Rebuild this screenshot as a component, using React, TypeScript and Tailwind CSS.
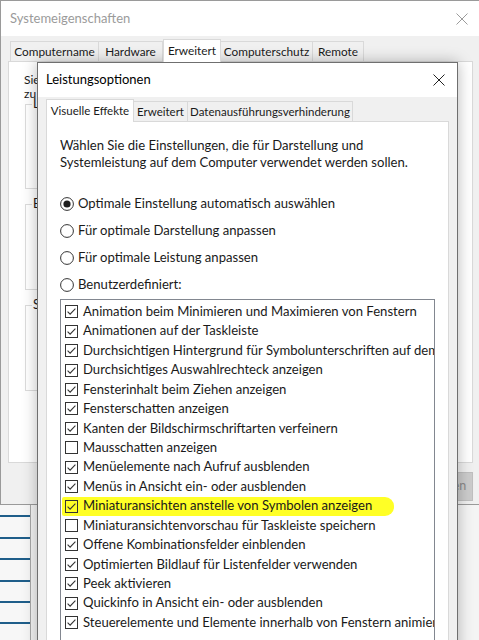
import React from 'react'

const effects: [string, boolean][] = [
  ['Animation beim Minimieren und Maximieren von Fenstern', true],
  ['Animationen auf der Taskleiste', true],
  ['Durchsichtigen Hintergrund für Symbolunterschriften auf dem Desktop', true],
  ['Durchsichtiges Auswahlrechteck anzeigen', true],
  ['Fensterinhalt beim Ziehen anzeigen', true],
  ['Fensterschatten anzeigen', true],
  ['Kanten der Bildschirmschriftarten verfeinern', true],
  ['Mausschatten anzeigen', false],
  ['Menüelemente nach Aufruf ausblenden', true],
  ['Menüs in Ansicht ein- oder ausblenden', true],
  ['Miniaturansichten anstelle von Symbolen anzeigen', true],
  ['Miniaturansichtenvorschau für Taskleiste speichern', false],
  ['Offene Kombinationsfelder einblenden', true],
  ['Optimierten Bildlauf für Listenfelder verwenden', true],
  ['Peek aktivieren', true],
  ['Quickinfo in Ansicht ein- oder ausblenden', true],
  ['Steuerelemente und Elemente innerhalb von Fenstern animieren', true],
]

const radios: [string, boolean][] = [
  ['Optimale Einstellung automatisch auswählen', true],
  ['Für optimale Darstellung anpassen', false],
  ['Für optimale Leistung anpassen', false],
  ['Benutzerdefiniert:', false],
]

function Check({ on }: { on: boolean }) {
  return (
    <svg width="13" height="13" viewBox="0 0 13 13" className="shrink-0">
      <rect x="0.5" y="0.5" width="12" height="12" fill="none" stroke="#333" />
      {on && <path d="M2.6 6.6 L5.1 9.1 L10.4 3.6" fill="none" stroke="#333" strokeWidth="1.1" />}
    </svg>
  )
}

function Radio({ on }: { on: boolean }) {
  return (
    <svg width="14" height="14" viewBox="0 0 14 14" className="shrink-0">
      <circle cx="7" cy="7" r="6.4" fill="#fff" stroke="#333" />
      {on && <circle cx="7" cy="7" r="3.6" fill="#1e1e1e" />}
    </svg>
  )
}

function CloseX({ color }: { color: string }) {
  return (
    <svg width="12" height="12" viewBox="0 0 12 12">
      <path d="M0.5 0.5 L11.5 11.5 M11.5 0.5 L0.5 11.5" stroke={color} strokeWidth="1" />
    </svg>
  )
}

export default function App() {
  return (
    <div className="relative w-[479px] h-[640px] overflow-hidden bg-[#f4f4f4] font-['Lato','Noto_Sans',sans-serif] text-[#1a1a1a]">
      {/* list window peeking out lower left */}
      <div className="absolute left-0 top-[496px] w-[31px] h-[150px] bg-[#f7f7f7] border-r border-[#a8a8a8] flex flex-col">
        {[0, 1, 2, 3, 4, 5, 6].map((i) => (
          <div key={i} className="h-[21.4px] shrink-0 border-b-2 border-[#1f5e8a]" />
        ))}
      </div>

      {/* Systemeigenschaften (inactive, behind) */}
      <div className="absolute left-0 top-0 w-[486px] h-[505px] border border-[#9a9a9a] bg-[#f0f0f0] flex flex-col">
        <div className="h-[35px] bg-white flex items-center justify-between pl-[9px] text-[13px] text-[#9b9b9b]">
          <span>Systemeigenschaften</span>
          <span className="w-[46px] flex justify-center">
            <CloseX color="#9b9b9b" />
          </span>
        </div>
        <div className="flex items-end h-[25px] pl-[9px] text-[11.8px] text-[#1a1a1a] whitespace-nowrap">
          <div className="w-[89px] h-[20px] flex items-center justify-center border border-b-0 border-[#d9d9d9]">Computername</div>
          <div className="w-[64px] h-[20px] flex items-center justify-center border border-l-0 border-b-0 border-[#d9d9d9]">Hardware</div>
          <div className="w-[58px] h-[23px] -mb-px z-10 flex items-center justify-center bg-white border border-b-0 border-[#d9d9d9]">Erweitert</div>
          <div className="w-[92px] h-[20px] flex items-center justify-center border border-l-0 border-b-0 border-[#d9d9d9]">Computerschutz</div>
          <div className="w-[51px] h-[20px] flex items-center justify-center border border-l-0 border-b-0 border-[#d9d9d9]">Remote</div>
        </div>
        <div className="ml-[7px] w-[465px] h-[402px] bg-white border border-[#d9d9d9] pt-[11px] px-[15px] text-[12px] leading-[14px]">
          <p className="whitespace-nowrap">
            Sie müssen als Administrator angemeldet sein, um diese Änderungen durchführen
            <br />
            zu können.
          </p>
          <div className="flex flex-col gap-[8px] -mt-[4px] ml-px text-[12.5px]">
            <fieldset className="h-[92px] border border-[#dcdcdc] px-[6px]">
              <legend className="px-px">Leistung</legend>
            </fieldset>
            <fieldset className="h-[93px] border border-[#dcdcdc] px-[6px]">
              <legend className="px-px">Benutzerprofile</legend>
            </fieldset>
            <fieldset className="h-[93px] border border-[#dcdcdc] px-[6px]">
              <legend className="px-px">Starten und Wiederherstellen</legend>
            </fieldset>
          </div>
        </div>
        <div className="flex justify-end gap-[7px] pr-[12px] mt-[9px] text-[12.5px]">
          <div className="w-[85px] h-[29px] flex items-center justify-center bg-[#e1e1e1] border border-[#0078d7]">OK</div>
          <div className="w-[85px] h-[29px] flex items-center justify-center bg-[#e1e1e1] border border-[#adadad]">Abbrechen</div>
          <div className="w-[85px] h-[29px] flex items-center justify-center bg-[#cccccc] border border-[#bfbfbf] text-[#8a8a8a]">Übernehmen</div>
        </div>
      </div>

      {/* Leistungsoptionen (active dialog) */}
      <div className="absolute left-[37px] top-[62px] w-[421px] h-[600px] border border-[#6f6f6f] bg-[#f0f0f0] flex flex-col shadow-[0_0_14px_rgba(0,0,0,0.28)]">
        <div className="h-[34px] bg-white flex items-center justify-between pl-[8px] text-[13px] text-black">
          <span>Leistungsoptionen</span>
          <span className="w-[36px] flex justify-center">
            <CloseX color="#222" />
          </span>
        </div>
        <div className="flex-1 flex flex-col px-[8px] pt-[1px]">
          <div className="flex items-end h-[23px] text-[11.5px] whitespace-nowrap">
            <div className="w-[88px] h-[23px] -mb-px z-10 flex items-center justify-center bg-white border border-b-0 border-[#d9d9d9]">Visuelle Effekte</div>
            <div className="w-[54px] h-[20px] flex items-center justify-center border border-l-0 border-b-0 border-[#d9d9d9]">Erweitert</div>
            <div className="w-[165px] h-[20px] flex items-center justify-center border border-l-0 border-b-0 border-[#d9d9d9]">Datenausführungsverhinderung</div>
          </div>
          <div className="flex-1 bg-white border border-[#d9d9d9] pt-[15px] px-[13px] text-[13.1px]">
            <p className="leading-[17px] whitespace-nowrap">
              Wählen Sie die Einstellungen, die für Darstellung und
              <br />
              Systemleistung auf dem Computer verwendet werden sollen.
            </p>
            <div className="mt-[19px] flex flex-col">
              {radios.map(([label, on]) => (
                <div key={label} className="h-[27px] flex items-center gap-[4px]">
                  <Radio on={on} />
                  <span>{label}</span>
                </div>
              ))}
            </div>
            <div className="mt-px w-[375px] h-[360px] border border-[#828790] bg-white pt-[2px] overflow-hidden">
              {effects.map(([label, on], i) =>
                i === 10 ? (
                  <div key={label} className="h-[19.44px] flex items-center pl-px whitespace-nowrap">
                    <span className="h-[19px] flex items-center gap-[5px] pl-[3px] pr-[22px] bg-[#ffff26] rounded-r-[9px] rounded-l-[2px]">
                      <Check on={on} />
                      <span>{label}</span>
                    </span>
                  </div>
                ) : (
                  <div key={label} className="h-[19.44px] flex items-center gap-[5px] pl-[4px] whitespace-nowrap">
                    <Check on={on} />
                    <span>{label}</span>
                  </div>
                )
              )}
            </div>
          </div>
        </div>
      </div>
    </div>
  )
}
